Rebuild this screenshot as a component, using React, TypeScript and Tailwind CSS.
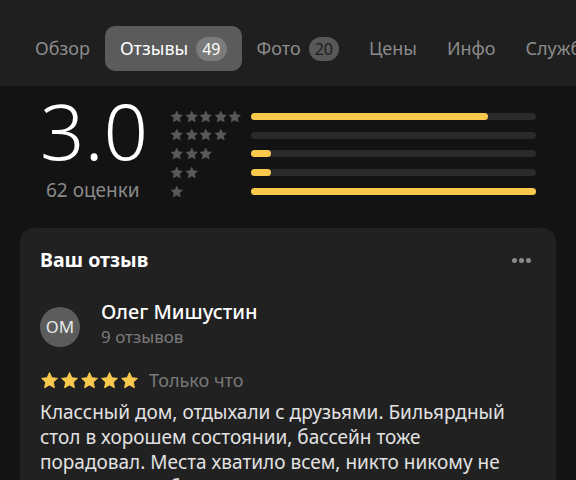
import React from 'react';

const tabs = [
  { label: 'Обзор' },
  { label: 'Отзывы', count: 49, active: true },
  { label: 'Фото', count: 20 },
  { label: 'Цены' },
  { label: 'Инфо' },
  { label: 'Службы' },
];

const distribution = [
  { stars: 5, value: 83 },
  { stars: 4, value: 0 },
  { stars: 3, value: 7 },
  { stars: 2, value: 7 },
  { stars: 1, value: 100 },
];

function Star({ className = '' }: { className?: string }) {
  return (
    <svg viewBox="0 0 24 24" className={className} fill="currentColor">
      <path
        d="M12 2l3 6.5 7 .8-5.2 4.8 1.4 7L12 17.6 5.8 21.1l1.4-7L2 9.3l7-.8z"
        stroke="currentColor"
        strokeWidth="1.2"
        strokeLinejoin="round"
      />
    </svg>
  );
}

export default function App() {
  return (
    <div
      className="w-[576px] h-[480px] overflow-hidden bg-[#131313] text-white"
      style={{ fontFamily: '"Noto Sans", "Open Sans", sans-serif' }}
    >
      {/* Tabs */}
      <div className="h-[86px] bg-[#1f1f1f] pt-[26px] pl-[20px]">
        <div className="flex items-center whitespace-nowrap">
          {tabs.map((tab) => (
            <div
              key={tab.label}
              className={`flex items-center gap-[8px] h-[45px] px-[15px] rounded-[10px] text-[18px] ${
                tab.active ? 'bg-[#5b5b5b] text-white' : 'text-[#8c8c8c]'
              }`}
            >
              <span>{tab.label}</span>
              {tab.count !== undefined && (
                <span
                  className={`h-[24px] px-[6px] rounded-full flex items-center text-[16px] ${
                    tab.active ? 'bg-[#7b7b7b] text-white' : 'bg-[#585858] text-[#1c1c1c]'
                  }`}
                >
                  {tab.count}
                </span>
              )}
            </div>
          ))}
        </div>
      </div>

      {/* Rating summary */}
      <div className="flex pt-[5px] pl-[40px] pr-[40px]">
        <div className="w-[130px] flex flex-col items-start">
          <div className="text-[78px] leading-[78px] font-light text-white">3.0</div>
          <div className="mt-[8px] pl-[6px] text-[19px] leading-[26px] text-[#8a8a8a]">62 оценки</div>
        </div>
        <div className="flex-1 flex flex-col gap-[5.7px] pt-[19px]">
          {distribution.map((row) => (
            <div key={row.stars} className="flex items-center h-[13px]">
              <div className="w-[81px] flex gap-[1px] text-[#595959]">
                {Array.from({ length: row.stars }).map((_, i) => (
                  <Star key={i} className="w-[13.5px] h-[13.5px]" />
                ))}
              </div>
              <div className="flex-1 h-[7px] rounded-full bg-[#2a2a2a]">
                <div
                  className="h-full rounded-full bg-[#f9c94e]"
                  style={{ width: `${row.value}%` }}
                />
              </div>
            </div>
          ))}
        </div>
      </div>

      {/* Review card */}
      <div className="mx-[20px] mt-[25px] rounded-[14px] bg-[#212121] px-[20px] pt-[18px] pb-[20px]">
        <div className="flex items-center justify-between h-[28px]">
          <div className="text-[19.5px] font-bold text-white">Ваш отзыв</div>
          <div className="flex gap-[2px] pr-[5px]">
            <span className="w-[5px] h-[5px] rounded-full bg-[#8a8a8a]" />
            <span className="w-[5px] h-[5px] rounded-full bg-[#8a8a8a]" />
            <span className="w-[5px] h-[5px] rounded-full bg-[#8a8a8a]" />
          </div>
        </div>

        <div className="flex items-start gap-[21px] mt-[25px]">
          <div className="mt-[8px] w-[40px] h-[40px] rounded-full bg-[#5c5c5c] flex items-center justify-center text-[17px] text-[#e8e8e8]">
            ОМ
          </div>
          <div className="flex flex-col">
            <div className="text-[20px] leading-[26px] font-medium text-white">Олег Мишустин</div>
            <div className="text-[17px] leading-[24px] text-[#7a7a7a]">9 отзывов</div>
          </div>
        </div>

        <div className="flex items-center gap-[10px] mt-[19px] h-[24px]">
          <div className="flex gap-[1px] text-[#f9c94e]">
            {Array.from({ length: 5 }).map((_, i) => (
              <Star key={i} className="w-[19px] h-[19px]" />
            ))}
          </div>
          <div className="text-[18px] text-[#7a7a7a]">Только что</div>
        </div>

        <p className="mt-[8px] w-[478px] text-[19px] leading-[25px] text-[#e2e2e2]">
          Классный дом, отдыхали с друзьями. Бильярдный стол в хорошем состоянии, бассейн тоже
          порадовал. Места хватило всем, никто никому не мешал. Спасибо!
        </p>
      </div>
    </div>
  );
}
